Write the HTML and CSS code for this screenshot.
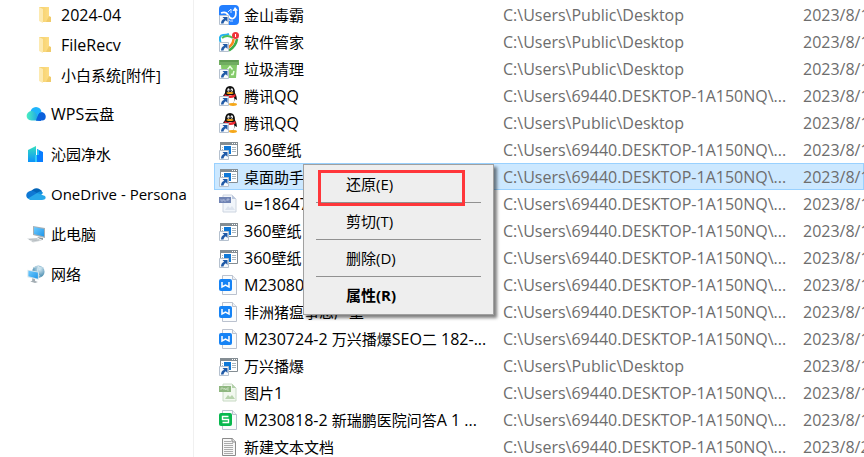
FILE: index.html
```html
<!DOCTYPE html>
<html lang="zh-CN">
<head>
<meta charset="utf-8">
<title>回收站</title>
<link rel="stylesheet" href="styles.css">
</head>
<body>
<svg class="defs" aria-hidden="true">
  <defs>
    <linearGradient id="gFolder" x1="0" x2="1"><stop offset="0" stop-color="#f4cf6b"/><stop offset="1" stop-color="#ffe08a"/></linearGradient>
    <linearGradient id="gCloud" x1="0" x2="1"><stop offset="0" stop-color="#4af0c0"/><stop offset="1" stop-color="#1593ee"/></linearGradient>
    <linearGradient id="gTower" x1="0" y1="0" x2="0" y2="1"><stop offset="0" stop-color="#35e0c0"/><stop offset="1" stop-color="#0c93fa"/></linearGradient>
    <linearGradient id="gScreen" x1="0" y1="0" x2="1" y2="1"><stop offset="0" stop-color="#6fcbff"/><stop offset="1" stop-color="#2196e8"/></linearGradient>
    <radialGradient id="gGlobe" cx=".6" cy=".3" r=".7"><stop offset="0" stop-color="#d5eaf4"/><stop offset="1" stop-color="#3b82a8"/></radialGradient>
  </defs>
  <symbol id="folder" viewBox="0 0 14 18">
    <path d="M1 1h10v10l2 1v4H3z" fill="url(#gFolder)"/>
    <path d="M11 10l2 1v5H8z" fill="#f0cb6a"/>
    <path d="M1 1l4 2v14l-4-2z" fill="#fdeab0"/>
  </symbol>
  <symbol id="cloud" viewBox="0 0 20 16">
    <circle cx="10" cy="6.500" r="5.500" fill="#1fb4fb"/>
    <path d="M10 14.500c2-3 2-8 6-8.500 5 1 5 8.500 0 8.500z" fill="#0a60dc"/>
    <path d="M5.500 14.500c-7-.5-6-9 0-9.500 4 0 6 5 9 9.500z" fill="url(#gCloud)"/>
    <path d="M10 14.500c1-3 2-6 4-8l1 8.500z" fill="#0a60dc"/>
  </symbol>
  <symbol id="tower" viewBox="0 0 20 18">
    <path d="M2 5l8-4v16H2z" fill="url(#gTower)"/>
    <path d="M11 4l6 3v10h-6z" fill="#087dff"/>
    <path d="M10 4l3 1v5h-3z" fill="#1fc4f6"/>
    <path d="M9 10h2v7H9z" fill="#31cafa"/>
    <path d="M10.500 4v6" stroke="#fff" stroke-width="1"/>
  </symbol>
  <symbol id="onedrive" viewBox="0 0 20 14">
    <path d="M5 5c2-5 9-5 11 0l-4 5-7-1z" fill="#0364b8"/>
    <path d="M4 4c3-1 5 1 7 2L7 12H4C-1 12-1 5 4 4z" fill="#0f78d4"/>
    <path d="M11 6c2-2 5-2 6 0l-5 5z" fill="#1490df"/>
    <path d="M2 11.500L11 6l8 3c2 3-1 4-3 4H4z" fill="#28a8ea"/>
  </symbol>
  <symbol id="pc" viewBox="0 0 20 18">
    <path d="M7 1l12 2v10L7 10z" fill="#a7b0b5"/>
    <path d="M8 2l10 2v7.500L8 9z" fill="url(#gScreen)"/>
    <path d="M11 12l6 1v2l-3-1z" fill="#8b969c"/>
    <path d="M1 13.500l10-.500 5 2.500-9 2z" fill="#d4d9dc"/>
    <path d="M3 14.500l8-.500M6 16l7-1" stroke="#aab0b4" stroke-width=".7" fill="none"/>
  </symbol>
  <symbol id="network" viewBox="0 0 20 19">
    <circle cx="12.500" cy="7" r="6.500" fill="url(#gGlobe)"/>
    <path d="M8 3c4-3 6 1 9 0M13 1c-2 3-2 9 2 12" stroke="#e3f0f5" fill="none" stroke-width=".7"/>
    <path d="M1 5l12 2v8.500L1 13z" fill="#d4e5ed"/>
    <path d="M2 6l10 2v6.500L2 12z" fill="url(#gScreen)"/>
    <path d="M6 14l3 1v2l3 1-3 1-5-1.500 2-1z" fill="#a3adb3"/>
  </symbol>
  <symbol id="arrow" viewBox="0 0 20 20">
    <path d="M.5 10.500h9v9h-9z" fill="#f8fafc" stroke="#b5c1cf"/>
    <path d="M3.500 12H8.500v5L6.800 15.300Q4.500 16.500 4.500 18.500H2Q2 15 5.200 13.700z" fill="#205aa7"/>
  </symbol>
  <symbol id="duba" viewBox="0 0 20 20">
    <rect width="20" height="20" rx="4" fill="#237fff"/>
    <path d="M2 8q5-2 7 2t5 3.500q4-1.500 2.500-9" stroke="#fff" stroke-width="1.700" fill="none"/>
    <path d="M13.500 6L16 2l3 3.500z" fill="#fff"/>
    <path d="M9 7l3-3v4M9 14q2 3 5 2" stroke="#cfe3ff" fill="none"/>
    <use href="#arrow"/>
  </symbol>
  <symbol id="manager" viewBox="0 0 20 20">
    <path d="M1.500 10Q-.5 3.500 4 3q4 0 6-1" stroke="#29b4ef" stroke-width="2" fill="none"/>
    <path d="M3 6q5-4 11 0" stroke="#4dc15a" stroke-width="2" fill="none"/>
    <path d="M18 7q-1 7-8 11.500" stroke="#3cae48" stroke-width="2.500" fill="none"/>
    <path d="M14.500 7q0 5-5 8.500" stroke="#f9851d" stroke-width="2.500" fill="none"/>
    <circle cx="16.500" cy="3.500" r="3.500" fill="#ef343b"/>
    <path d="M16.500 2v3" stroke="#fff"/>
    <use href="#arrow"/>
  </symbol>
  <symbol id="clean" viewBox="0 0 20 20">
    <path d="M0 1h20v5H0z" fill="#71ad61"/>
    <path d="M1 2h18" stroke="#4b863f"/>
    <path d="M2 6h16l-1 13H3z" fill="#84ca6a"/>
    <path d="M8.500 10.500l2.500-3 2.500 3M15 12l-1 3.500h-2M10 15.500H8l-.5-3" fill="none" stroke="#e9ffe0" stroke-width="1.500"/>
    <use href="#arrow"/>
  </symbol>
  <symbol id="qq" viewBox="0 0 20 20">
    <path d="M3 12q2-4 3-5 0-7 5-7t5 7q2 3 2 7l-2-1q-1 5-5 5-6 0-6-6z" fill="#101010"/>
    <ellipse cx="11.500" cy="13.500" rx="4" ry="4.500" fill="#fff"/>
    <ellipse cx="9.500" cy="4" rx="1.200" ry="1.800" fill="#fff"/><ellipse cx="12.800" cy="4" rx="1.200" ry="1.800" fill="#fff"/>
    <circle cx="10" cy="4.200" r=".5"/><circle cx="12.500" cy="4.200" r=".5"/>
    <ellipse cx="11" cy="7" rx="3.500" ry="1" fill="#f7a81a"/>
    <path d="M5.500 8q5 3 11 0v2.500q-5 3-11 0z" fill="#ef2830"/>
    <ellipse cx="14" cy="18.500" rx="4" ry="1.400" fill="#f5a719"/>
    <use href="#arrow"/>
  </symbol>
  <symbol id="window" viewBox="0 0 20 20">
    <path d="M1.500 2.500h17v13h-17z" fill="#fff" stroke="#848d93"/>
    <path d="M1 2h18v3H1z" fill="#848d93"/>
    <path d="M13 3.500h1m1 0h1m1 0h1" stroke="#fff"/>
    <path d="M5 6h7v8H5z" fill="#0f78d7"/>
    <path d="M13 7.500h4M13 9.500h4M13 11.500h4M3 7.500h1M3 9.500h1" stroke="#a9b6be"/>
    <use href="#arrow"/>
  </symbol>
  <symbol id="pagefold" viewBox="0 0 20 20">
    <path d="M3.500 .5h10l4 4v15h-14z" fill="#fafcfd" stroke="#bbc2cf"/>
    <path d="M13.500 .5v4h4" fill="#eef1f5" stroke="#bbc2cf"/>
  </symbol>
  <symbol id="webp" viewBox="0 0 20 20">
    <path d="M4 1h9l4 4v13H4z" fill="#f1f5fa" stroke="#cdd5e1"/>
    <path d="M13 1v4h4z" fill="#bcc8dd"/>
    <path d="M0 3h12v6H0z" fill="#7084b4"/>
    <path d="M2 5v2h2V5m1 0v2h2M8 7V5h2v1H8" stroke="#b7c3df" stroke-width=".7" fill="none"/>
    <path d="M6 16l3-4 2 2 2-2 3 4z" fill="#dce3ee"/>
  </symbol>
  <symbol id="png" viewBox="0 0 20 20">
    <path d="M4 1h9l4 4v13H4z" fill="#f2f8ef" stroke="#c8dac4"/>
    <path d="M13 1v4h4z" fill="#b4d1aa"/>
    <path d="M0 3h12v6H0z" fill="#8fb780"/>
    <path d="M2 7V5h2v1M5 7V5l2 2V5m3 0H8v2h2" stroke="#d2e5cb" stroke-width=".7" fill="none"/>
    <path d="M6 16l3-4 2 2 2-2 3 4z" fill="#b7d3ac"/>
  </symbol>
  <symbol id="word" viewBox="0 0 20 20">
    <use href="#pagefold"/>
    <rect y="4" width="13" height="12" rx="2" fill="#1683f5"/>
    <path d="M3 7v5l3.500-2L10 12V7" stroke="#fff" stroke-width="1.500" fill="none"/>
  </symbol>
  <symbol id="sheet" viewBox="0 0 20 20">
    <use href="#pagefold"/>
    <rect y="3" width="13" height="13" rx="2" fill="#08b84f"/>
    <path d="M9.500 6.500h-6v3h6v3h-6" stroke="#fff" stroke-width="1.400" fill="none"/>
  </symbol>
  <symbol id="text" viewBox="0 0 20 20">
    <path d="M3.500 1.500h10l3 3v14h-13z" fill="#f7f7f7" stroke="#8b8b8b"/>
    <path d="M13 1v4h4" fill="#ddd" stroke="#8b8b8b"/>
    <path d="M5 4.500h7M5 6.500h9M5 8.500h9M5 10.500h9M5 12.500h9M5 14.500h9M5 16.500h9" stroke="#ababab"/>
  </symbol>
</svg>

<div class="explorer">
  <nav class="sidebar" aria-label="导航窗格">
    <ul class="folders">
      <li><a href="#"><svg class="folder-icon"><use href="#folder"/></svg><span class="latin">2024-04</span></a></li>
      <li><a href="#"><svg class="folder-icon"><use href="#folder"/></svg><span class="latin">FileRecv</span></a></li>
      <li><a href="#"><svg class="folder-icon"><use href="#folder"/></svg>小白系统[附件]</a></li>
    </ul>
    <ul class="places">
      <li><a href="#"><svg class="place-icon"><use href="#cloud"/></svg><span><span class="latin">WPS</span>云盘</span></a></li>
      <li><a href="#"><svg class="place-icon"><use href="#tower"/></svg>沁园净水</a></li>
      <li><a href="#"><svg class="place-icon"><use href="#onedrive"/></svg>OneDrive - Persona</a></li>
      <li><a href="#"><svg class="place-icon"><use href="#pc"/></svg>此电脑</a></li>
      <li><a href="#"><svg class="place-icon"><use href="#network"/></svg>网络</a></li>
    </ul>
  </nav>

  <main class="content">
    <table class="files">
      <colgroup><col class="col-name"><col class="col-path"><col class="col-date"></colgroup>
      <tbody>
        <tr><td><div class="name"><svg><use href="#duba"/></svg>金山毒霸</div></td><td>C:\Users\Public\Desktop</td><td>2023/8/1</td></tr>
        <tr><td><div class="name"><svg><use href="#manager"/></svg>软件管家</div></td><td>C:\Users\Public\Desktop</td><td>2023/8/1</td></tr>
        <tr><td><div class="name"><svg><use href="#clean"/></svg>垃圾清理</div></td><td>C:\Users\Public\Desktop</td><td>2023/8/1</td></tr>
        <tr><td><div class="name"><svg><use href="#qq"/></svg><span>腾讯<span class="latin">QQ</span></span></div></td><td>C:\Users\69440.DESKTOP-1A150NQ\...</td><td>2023/8/1</td></tr>
        <tr><td><div class="name"><svg><use href="#qq"/></svg><span>腾讯<span class="latin">QQ</span></span></div></td><td>C:\Users\Public\Desktop</td><td>2023/8/1</td></tr>
        <tr><td><div class="name"><svg><use href="#window"/></svg><span><span class="latin">360</span>壁纸</span></div></td><td>C:\Users\69440.DESKTOP-1A150NQ\...</td><td>2023/8/1</td></tr>
        <tr class="selected"><td><div class="name"><svg><use href="#window"/></svg>桌面助手</div></td><td>C:\Users\69440.DESKTOP-1A150NQ\...</td><td>2023/8/1</td></tr>
        <tr><td><div class="name"><svg><use href="#webp"/></svg><span class="latin">u=18647</span></div></td><td>C:\Users\69440.DESKTOP-1A150NQ\...</td><td>2023/8/1</td></tr>
        <tr><td><div class="name"><svg><use href="#window"/></svg><span><span class="latin">360</span>壁纸</span></div></td><td>C:\Users\69440.DESKTOP-1A150NQ\...</td><td>2023/8/1</td></tr>
        <tr><td><div class="name"><svg><use href="#window"/></svg><span><span class="latin">360</span>壁纸</span></div></td><td>C:\Users\69440.DESKTOP-1A150NQ\...</td><td>2023/8/1</td></tr>
        <tr><td><div class="name"><svg><use href="#word"/></svg><span class="latin">M23080</span></div></td><td>C:\Users\69440.DESKTOP-1A150NQ\...</td><td>2023/8/1</td></tr>
        <tr><td><div class="name"><svg><use href="#word"/></svg>非洲猪瘟事态严重</div></td><td>C:\Users\69440.DESKTOP-1A150NQ\...</td><td>2023/8/1</td></tr>
        <tr><td><div class="name"><svg><use href="#word"/></svg><span><span class="latin">M230724-2 </span>万兴播爆<span class="latin">SEO</span>二<span class="latin"> 182-...</span></span></div></td><td>C:\Users\69440.DESKTOP-1A150NQ\...</td><td>2023/8/1</td></tr>
        <tr><td><div class="name"><svg><use href="#window"/></svg>万兴播爆</div></td><td>C:\Users\Public\Desktop</td><td>2023/8/1</td></tr>
        <tr><td><div class="name"><svg><use href="#png"/></svg><span>图片<span class="latin">1</span></span></div></td><td>C:\Users\69440.DESKTOP-1A150NQ\...</td><td>2023/8/1</td></tr>
        <tr><td><div class="name"><svg><use href="#sheet"/></svg><span><span class="latin">M230818-2 </span>新瑞鹏医院问答<span class="latin">A 1 ...</span></span></div></td><td>C:\Users\69440.DESKTOP-1A150NQ\...</td><td>2023/8/1</td></tr>
        <tr><td><div class="name"><svg><use href="#text"/></svg>新建文本文档</div></td><td>C:\Users\69440.DESKTOP-1A150NQ\...</td><td>2023/8/2</td></tr>
      </tbody>
    </table>

    <div class="menu" role="menu">
      <button class="highlighted" type="button" role="menuitem">还原(E)</button>
      <hr>
      <button type="button" role="menuitem">剪切(T)</button>
      <hr>
      <button type="button" role="menuitem">删除(D)</button>
      <hr>
      <button class="default" type="button" role="menuitem">属性(R)</button>
    </div>
  </main>
</div>
</body>
</html>
```
FILE: styles.css
```css
* {
  box-sizing: border-box;
}

body {
  margin: 0;
  background: #fff;
  color: #000;
  font: 15px/26px "Open Sans", "Noto Sans CJK SC", sans-serif;
  overflow: hidden;
}

.defs {
  position: absolute;
  width: 0;
  height: 0;
}

.latin {
  font-size: 16px;
}

.explorer {
  display: flex;
  height: 100vh;
}

.sidebar {
  flex: none;
  width: 194px;
  border-right: 1px solid #f0f0f0;
}

.sidebar ul {
  margin: 0;
  padding: 0;
  list-style: none;
}

.sidebar a {
  display: flex;
  align-items: center;
  color: inherit;
  text-decoration: none;
  white-space: nowrap;
}

.sidebar svg {
  flex: none;
}

.folders a {
  height: 30px;
  padding-left: 38px;
  gap: 9px;
}

.folder-icon {
  width: 14px;
  height: 18px;
}

.sidebar .places {
  padding: 4px 0 0 26px;
}

.places a {
  height: 40px;
  gap: 5px;
}

.place-icon {
  width: 20px;
  height: 18px;
}

.content {
  position: relative;
  flex: 1;
  min-width: 0;
  padding: 1px 0 0 20px;
  overflow: hidden;
}

.files {
  width: 100%;
  min-width: 650px;
  table-layout: fixed;
  border-collapse: collapse;
}

.col-name {
  width: 289px;
}

.col-path {
  width: 300px;
}

.files td {
  height: 27px;
  padding: 0;
  color: #6d6d6d;
  font-size: 16px;
  line-height: 26px;
  white-space: nowrap;
}

.name {
  display: flex;
  align-items: center;
  height: 26px;
  padding-left: 5px;
  gap: 5px;
  color: #000;
  font-size: 15px;
}

.name svg {
  flex: none;
  width: 20px;
  height: 20px;
}

.selected {
  background: #cce8ff;
  box-shadow: inset 0 0 0 1px #99d1ff;
}

.menu {
  position: absolute;
  top: 164px;
  left: 109px;
  width: 191px;
  padding: 2px 12px;
  border: 1px solid #a0a0a0;
  background: #eee;
  box-shadow: 3px 3px 3px rgba(0, 0, 0, 0.5);
}

.menu button {
  display: block;
  width: 100%;
  height: 34px;
  padding: 0 0 0 30px;
  border: 0;
  background: none;
  color: #000;
  font: inherit;
  text-align: left;
}

.menu .default {
  font-weight: 700;
}

.menu hr {
  height: 1px;
  margin: 1px 0;
  border: 0;
  background: #919191;
}

.menu .highlighted {
  position: relative;
}

.menu .highlighted::after {
  content: "";
  position: absolute;
  inset: 3px 16px -5px 2px;
  border: 3px solid #ff363a;
}
```
